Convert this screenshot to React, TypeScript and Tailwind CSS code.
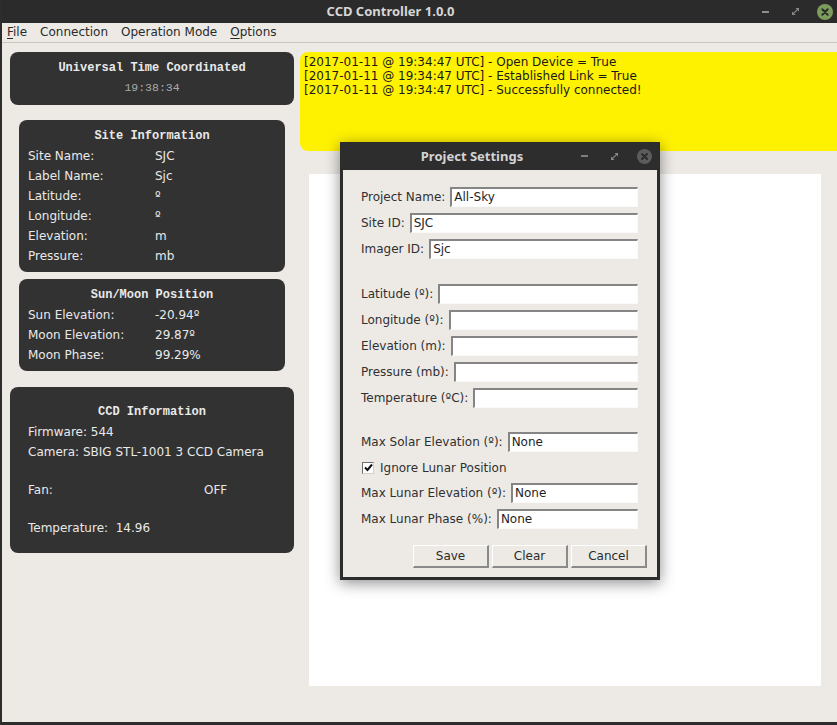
import React from "react";

const sans = "font-['DejaVu_Sans',sans-serif]";
const wm = "font-['Noto_Sans',sans-serif]";
const mono = "font-['Liberation_Mono',monospace]";

function Minimize({ color = "#8e8e8e" }: { color?: string }) {
  return <div className="w-[7px] h-[2px]" style={{ background: color }} />;
}

function Maximize() {
  return (
    <svg width="7" height="7" viewBox="0 0 8 8">
      <path d="M4 0H8V4Z" fill="#8a8a8a" />
      <path d="M0 4V8H4Z" fill="#8a8a8a" />
      <path d="M6.5 1.5L1.5 6.5" stroke="#8a8a8a" strokeWidth="1.4" />
    </svg>
  );
}

function Close({ bg, size }: { bg: string; size: number }) {
  return (
    <svg width={size} height={size} viewBox="0 0 16 16">
      <circle cx="8" cy="8" r="8" fill={bg} />
      <path d="M5.3 5.3L10.7 10.7M10.7 5.3L5.3 10.7" stroke="#2b2b2b" strokeWidth="2" strokeLinecap="round" />
    </svg>
  );
}

function InfoRow({ label, value }: { label: string; value: string }) {
  return (
    <div className="flex h-[20px] items-center">
      <span className="w-[127px] shrink-0">{label}</span>
      <span>{value}</span>
    </div>
  );
}

function Field({ label, value = "" }: { label: string; value?: string }) {
  return (
    <div className="flex h-[20px] items-center gap-[5px]">
      <span className="whitespace-nowrap">{label}</span>
      <div className="flex-1 h-[20px] bg-white border-t-2 border-l-2 border-r border-b border-t-[#858585] border-l-[#858585] border-r-[#fafafa] border-b-[#fafafa] pl-[2px] leading-[17px] text-[#1e1e1e]">
        {value}
      </div>
    </div>
  );
}

function Button({ label }: { label: string }) {
  return (
    <div className="w-[76px] h-[23px] flex items-center justify-center bg-[#edeae6] border-t border-l border-b-2 border-r-2 border-t-white border-l-white border-b-[#8a8a8a] border-r-[#8a8a8a] text-[#2a2a2a]">
      {label}
    </div>
  );
}

const logLines = [
  "[2017-01-11 @ 19:34:47 UTC] - Open Device = True",
  "[2017-01-11 @ 19:34:47 UTC] - Established Link = True",
  "[2017-01-11 @ 19:34:47 UTC] - Successfully connected!",
];

export default function App() {
  return (
    <div className={`relative w-[837px] h-[725px] overflow-hidden bg-[#edeae6] border-l-2 border-b-[3px] border-[#2d2d2d] flex flex-col text-[12px] ${sans}`}>
      {/* Title bar */}
      <div className={`h-[23px] shrink-0 bg-[#2b2b2b] flex items-center relative ${wm}`}>
        <div className="flex-1 text-center text-[13px] font-bold text-[#d6d6d6] pr-[58px]">CCD Controller 1.0.0</div>
        <div className="absolute right-[4px] top-0 h-[23px] flex items-center gap-[14px]">
          <div className="w-[16px] flex justify-center"><Minimize /></div>
          <div className="w-[16px] flex justify-center"><Maximize /></div>
          <div className="w-[16px] flex justify-center"><Close bg="#7c9c5c" size={16} /></div>
        </div>
      </div>

      {/* Menu bar */}
      <div className="h-[20px] shrink-0 flex items-center gap-[13px] pl-[5px] pb-[1px] text-[#2a2a2a] border-b border-[#c9c6c1]">
        <span><span className="underline underline-offset-2">F</span>ile</span>
        <span>Connection</span>
        <span>Operation Mode</span>
        <span><span className="underline underline-offset-2">O</span>ptions</span>
      </div>

      <div className="flex flex-1">
        {/* Left column */}
        <div className="w-[298px] shrink-0 flex flex-col text-[#e9e9e9]">
          <div className="mt-[9px] ml-[8px] w-[284px] h-[53px] rounded-[8px] bg-[#323232] pt-[6px] flex flex-col items-center">
            <div className={`h-[20px] leading-[20px] text-[12px] font-bold ${mono}`}>Universal Time Coordinated</div>
            <div className={`h-[20px] leading-[20px] text-[11.5px] text-[#a9a9a9] ${mono}`}>19:38:34</div>
          </div>

          <div className="mt-[15px] ml-[17px] w-[266px] rounded-[8px] bg-[#323232] py-[6px] px-[9px]">
            <div className={`h-[20px] leading-[20px] text-center text-[12px] font-bold ${mono}`}>Site Information</div>
            <InfoRow label="Site Name:" value="SJC" />
            <InfoRow label="Label Name:" value="Sjc" />
            <InfoRow label="Latitude:" value="º" />
            <InfoRow label="Longitude:" value="º" />
            <InfoRow label="Elevation:" value="m" />
            <InfoRow label="Pressure:" value="mb" />
          </div>

          <div className="mt-[7px] ml-[17px] w-[266px] rounded-[8px] bg-[#323232] py-[6px] px-[9px]">
            <div className={`h-[20px] leading-[20px] text-center text-[12px] font-bold ${mono}`}>Sun/Moon Position</div>
            <InfoRow label="Sun Elevation:" value="-20.94º" />
            <InfoRow label="Moon Elevation:" value="29.87º" />
            <InfoRow label="Moon Phase:" value="99.29%" />
          </div>

          <div className="mt-[16px] ml-[8px] w-[284px] h-[166px] rounded-[8px] bg-[#323232] pt-[15px] px-[18px]">
            <div className={`h-[20px] leading-[20px] text-center text-[12px] font-bold ${mono}`}>CCD Information</div>
            <div className="h-[20px] leading-[20px]">Firmware: 544</div>
            <div className="h-[20px] leading-[20px]">Camera: SBIG STL-1001 3 CCD Camera</div>
            <div className="mt-[18px] h-[20px] leading-[20px] flex">
              <span className="w-[176px]">Fan:</span>
              <span>OFF</span>
            </div>
            <div className="mt-[18px] h-[20px] leading-[20px] whitespace-pre">Temperature:  14.96</div>
          </div>
        </div>

        {/* Right column */}
        <div className="flex-1 flex flex-col">
          <div className="mt-[9px] h-[99px] rounded-l-[8px] bg-[#fff200] pl-[4px] pt-[3px] text-[#1a1a1a] leading-[14px]">
            {logLines.map((l) => (
              <div key={l}>{l}</div>
            ))}
          </div>
          <div className="mt-[23px] ml-[9px] w-[512px] h-[512px] bg-white" />
        </div>
      </div>

      {/* Project Settings dialog */}
      <div className="absolute left-[338px] top-[142px] w-[320px] flex flex-col shadow-[0_3px_14px_rgba(0,0,0,0.45)]">
        <div className={`h-[28px] bg-[#2d2d2d] flex items-center relative pt-[1px] ${wm}`}>
          <div className="w-[264px] text-center text-[13px] font-bold text-[#d4d4d4]">Project Settings</div>
          <div className="absolute right-[8px] top-0 h-[28px] flex items-center gap-[14px]">
            <div className="w-[16px] flex justify-center"><Minimize color="#7d7d7d" /></div>
            <div className="w-[16px] flex justify-center"><Maximize /></div>
            <div className="w-[16px] flex justify-center"><Close bg="#5c5c5c" size={15} /></div>
          </div>
        </div>
        <div className="h-[410px] bg-[#edeae6] border-x-[3px] border-b-[3px] border-[#2d2d2d] pt-[17px] pl-[18px] pr-[19px] text-[#303030]">
          <div className="flex flex-col gap-[6px]">
            <Field label="Project Name:" value="All-Sky" />
            <Field label="Site ID:" value="SJC" />
            <Field label="Imager ID:" value="Sjc" />
          </div>
          <div className="mt-[25px] flex flex-col gap-[6px]">
            <Field label="Latitude (º):" />
            <Field label="Longitude (º):" />
            <Field label="Elevation (m):" />
            <Field label="Pressure (mb):" />
            <Field label="Temperature (ºC):" />
          </div>
          <div className="mt-[24px] flex flex-col gap-[6px]">
            <Field label="Max Solar Elevation (º):" value="None" />
            <div className="flex h-[19px] items-center gap-[6px] pl-[1px]">
              <div className="w-[12px] h-[12px] bg-white border-t border-l border-r border-b border-t-[#6e6e6e] border-l-[#6e6e6e] border-r-[#d0d0d0] border-b-[#d0d0d0] flex items-center justify-center">
                <svg width="9" height="9" viewBox="0 0 9 9">
                  <path d="M1 4.5L3.5 7L8 1.5" stroke="#111" strokeWidth="2" fill="none" />
                </svg>
              </div>
              <span>Ignore Lunar Position</span>
            </div>
            <Field label="Max Lunar Elevation (º):" value="None" />
            <Field label="Max Lunar Phase (%):" value="None" />
          </div>
          <div className="mt-[16px] mr-[-9px] flex justify-end gap-[3px]">
            <Button label="Save" />
            <Button label="Clear" />
            <Button label="Cancel" />
          </div>
        </div>
      </div>
    </div>
  );
}
